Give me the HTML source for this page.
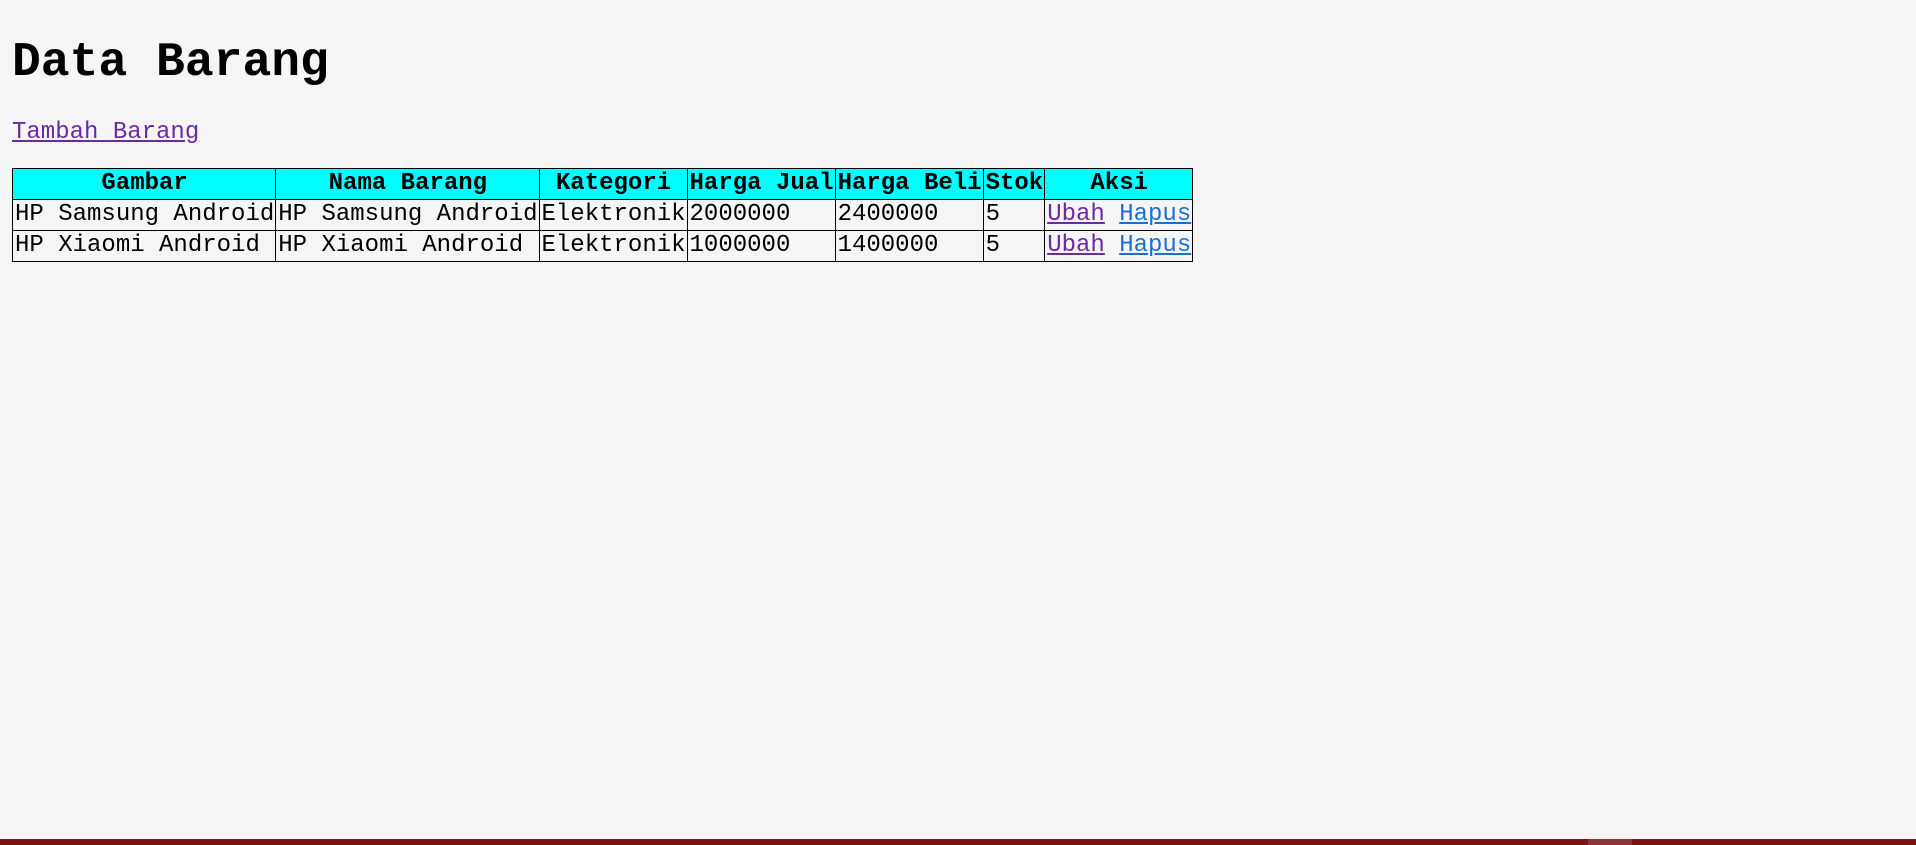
<!DOCTYPE html>
<html><head><meta charset="utf-8"><style>
html,body{margin:0;padding:0;background:#f5f5f5;}
body{margin:0 12px;font-family:"Liberation Mono","Courier New",monospace;font-size:24px;color:#000;height:845px;overflow:hidden;position:relative;}
h1{font-size:48px;margin:0;padding-top:36px;line-height:54px;font-weight:bold;}
p{margin:29px 0 22px;line-height:27px;}
a.v{color:#6a2aa0;}
a.b{color:#1a6fd0;}
table{border-collapse:collapse;border:1px solid #000;}
th,td{border:1px solid #000;padding:1px 1px 2px 2px;line-height:27px;white-space:nowrap;text-align:left;}
th{background:#00ffff;text-align:center;}
.bar{position:absolute;left:-12px;right:-12px;bottom:0;height:6px;background:#7d1414;}
.bar i{position:absolute;left:1588px;width:44px;top:0;bottom:0;background:#8f3535;}
</style></head><body>
<h1>Data Barang</h1>
<p><a class="v" href="#">Tambah Barang</a></p>
<table>
<tr><th>Gambar</th><th>Nama Barang</th><th>Kategori</th><th>Harga Jual</th><th>Harga Beli</th><th>Stok</th><th>Aksi</th></tr>
<tr><td>HP Samsung Android</td><td>HP Samsung Android</td><td>Elektronik</td><td>2000000</td><td>2400000</td><td>5</td><td><a class="v" href="#">Ubah</a> <a class="b" href="#">Hapus</a></td></tr>
<tr><td>HP Xiaomi Android</td><td>HP Xiaomi Android</td><td>Elektronik</td><td>1000000</td><td>1400000</td><td>5</td><td><a class="v" href="#">Ubah</a> <a class="b" href="#">Hapus</a></td></tr>
</table>
<div class="bar"><i></i></div>
</body></html>
